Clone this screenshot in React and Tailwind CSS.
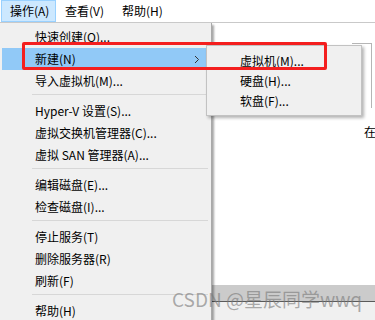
import React from 'react'

const menuBar = ['操作(A)', '查看(V)', '帮助(H)']

const groups = [
  ['快速创建(Q)...', '新建(N)', '导入虚拟机(M)...'],
  ['Hyper-V 设置(S)...', '虚拟交换机管理器(C)...', '虚拟 SAN 管理器(A)...'],
  ['编辑磁盘(E)...', '检查磁盘(I)...'],
  ['停止服务(T)', '删除服务器(R)', '刷新(F)'],
  ['帮助(H)']
]

const subItems = ['虚拟机(M)...', '硬盘(H)...', '软盘(F)...']

function Chevron() {
  return (
    <svg width="6" height="9" viewBox="0 0 6 9" className="absolute right-[9px] top-[7px]">
      <path d="M1 1l3.5 3.5L1 8" fill="none" stroke="#333" strokeWidth="1" />
    </svg>
  )
}

function MenuItem({ label }) {
  const active = label === '新建(N)'
  return (
    <div
      className={`relative h-[22px] flex items-center pl-[33px] mx-[2px] ${active ? 'bg-[#91c9f7]' : ''}`}
    >
      <span>{label}</span>
      {active && <Chevron />}
    </div>
  )
}

export default function App() {
  return (
    <div className="relative w-[375px] h-[320px] overflow-hidden bg-white text-[12px] text-black font-['Noto_Sans_CJK_SC',sans-serif] leading-none">
      {/* menu bar */}
      <div className="h-[23px] flex items-start border-b border-[#c9c9c9] bg-white">
        {menuBar.map((m, i) => (
          <div
            key={m}
            className={`h-[22px] flex items-center whitespace-nowrap ${i === 0 ? 'ml-[1px] bg-[#cce8ff] border border-[#99d1ff] w-[55px] pl-[8px]' : 'px-[9px]'}`}
          >
            {m}
          </div>
        ))}
      </div>

      <div className="flex h-[297px]">
        {/* main dropdown */}
        <div className="w-[212px] bg-[#f0f0f0] border-r border-[#a9a9a9] shadow-[2px_2px_2px_rgba(0,0,0,0.35)] pt-[3px] z-10">
          {groups.map((g, gi) => (
            <div key={gi}>
              {gi > 0 && (
                <div className="pt-[2px] pb-[5px] pl-[32px] pr-[3px]">
                  <div className="h-px bg-[#d7d7d7]" />
                </div>
              )}
              {g.map(label => (
                <MenuItem key={label} label={label} />
              ))}
            </div>
          ))}
        </div>

        {/* window behind */}
        <div className="flex-1 flex flex-col bg-white">
          <div className="mt-[20px] h-[65px] border-t border-[#b5b5b5] ml-[140px] mr-[3px] border-r" />
          <div className="flex-1 flex justify-end pt-[18px]">
            <span className="mr-[-1px]">在</span>
          </div>
          <div className="h-[16px] bg-[#cbcbcb]" />
          <div className="h-px bg-[#5a5a5a]" />
          <div className="h-[18px] bg-[#f0f0f0]" />
        </div>
      </div>

      {/* submenu */}
      <div className="absolute left-[206px] top-[45px] w-[156px] h-[71px] bg-[#f0f0f0] border border-[#c2c2c2] shadow-[2px_2px_3px_rgba(0,0,0,0.3)] pt-[5px] z-20">
        {subItems.map(s => (
          <div key={s} className="h-[20px] flex items-center pl-[33px]">
            {s}
          </div>
        ))}
      </div>

      {/* red annotation */}
      <div className="absolute left-[22px] top-[42px] w-[305px] h-[28px] border-[3px] border-[#f41f1f] rounded-[2px] z-30" />

      {/* watermark */}
      <div className="absolute left-[172px] top-[289px] z-40 text-[19px] text-[rgba(120,120,120,0.6)] font-['Noto_Sans_CJK_SC',sans-serif] whitespace-nowrap">
        CSDN @星辰同学wwq
      </div>
    </div>
  )
}
